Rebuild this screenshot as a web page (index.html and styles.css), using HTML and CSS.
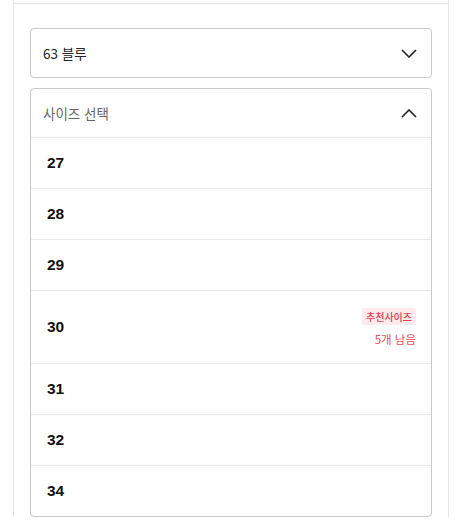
FILE: index.html
```html
<!DOCTYPE html>
<html lang="ko">

<head>
    <meta charset="UTF-8">
    <meta name="viewport" content="width=device-width, initial-scale=1.0">
    <title>사이즈 선택</title>
    <link rel="stylesheet" href="styles.css">
</head>

<body>
    <div class="panel">
        <div class="panel-top"></div>
        <div class="options">
            <!-- 색상 선택 -->
            <div class="select">
                <span class="select-label">63 블루</span>
                <svg class="chevron" width="16" height="9" viewBox="0 0 16 9">
                    <path d="M1 1l7 7 7-7" fill="none" stroke="#222" stroke-width="1.6" />
                </svg>
            </div>
            <!-- 사이즈 선택 (열림) -->
            <div class="dropdown">
                <div class="dropdown-head">
                    <span class="placeholder">사이즈 선택</span>
                    <svg class="chevron" width="16" height="9" viewBox="0 0 16 9">
                        <path d="M1 8l7-7 7 7" fill="none" stroke="#222" stroke-width="1.6" />
                    </svg>
                </div>
                <ul class="size-list">
                    <li class="size-item">27</li>
                    <li class="size-item">28</li>
                    <li class="size-item">29</li>
                    <li class="size-item size-item--tall">
                        <span>30</span>
                        <div class="size-info">
                            <span class="badge">추천사이즈</span>
                            <span class="stock">5개 남음</span>
                        </div>
                    </li>
                    <li class="size-item">31</li>
                    <li class="size-item">32</li>
                    <li class="size-item">34</li>
                </ul>
            </div>
        </div>
    </div>
</body>

</html>
```

FILE: styles.css
```css
* {
    margin: 0;
    padding: 0;
    box-sizing: border-box;
}

body {
    background-color: #fff;
    font-family: "Liberation Sans", "Noto Sans CJK KR", sans-serif;
    color: #222;
}

.panel {
    width: 436px;
    margin-left: 13px;
    border-left: 1px solid #e6e6e6;
    border-right: 1px solid #e6e6e6;
}

.panel-top {
    height: 4px;
    border-bottom: 1px solid #e6e6e6;
}

.options {
    padding: 24px 16px 0;
    display: flex;
    flex-direction: column;
    gap: 10px;
}

.select,
.dropdown-head {
    display: flex;
    justify-content: space-between;
    align-items: center;
    padding: 0 14px 0 12px;
    font-family: "Noto Sans CJK KR", sans-serif;
    font-size: 13.5px;
}

.select {
    height: 50px;
    border: 1px solid #c9c9c9;
    border-radius: 4px;
}

.select-label {
    color: #222;
}

.placeholder {
    color: #666;
}

.dropdown {
    border: 1px solid #c9c9c9;
    border-radius: 4px;
}

.dropdown-head {
    height: 48px;
}

.size-list {
    list-style: none;
}

.size-item {
    display: flex;
    justify-content: space-between;
    align-items: center;
    height: 51px;
    padding: 0 15px 1px 16px;
    border-top: 1px solid #e8e8e8;
    font-size: 15.5px;
    font-weight: bold;
    color: #111;
}

.size-item--tall {
    height: 73px;
}

/* 추천 배지와 재고 */
.size-info {
    display: flex;
    flex-direction: column;
    align-items: flex-end;
    gap: 7px;
    padding-top: 2px;
    font-family: "Noto Sans CJK KR", sans-serif;
    font-weight: normal;
}

.badge {
    padding: 1px 4px;
    background: #fdeaec;
    color: #e0414e;
    font-size: 10px;
    font-weight: 500;
    line-height: 15px;
    border-radius: 2px;
}

.stock {
    color: #e0505c;
    font-size: 11.5px;
    line-height: 15px;
}
```
